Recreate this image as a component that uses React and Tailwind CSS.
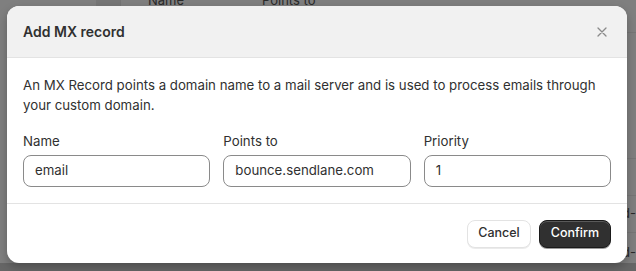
import React from "react";

export default function App() {
  return (
    <div
      className="relative w-[636px] h-[271px] overflow-hidden bg-[#7f7f7f]"
      style={{ fontFamily: "Inter, 'Noto Sans', sans-serif" }}
    >
      {/* underlying page seen through the overlay */}
      <div className="absolute inset-0 pointer-events-none">
        <div className="absolute left-[96px] top-0 h-full w-[24px] bg-[#767676]" />
        <div className="absolute left-[120px] top-0 h-full w-px bg-[#747474]" />
        <div className="absolute left-[148px] top-[-9px] text-[13px] text-[#2a2a2a]">Name</div>
        <div className="absolute left-[262px] top-[-9px] text-[13px] text-[#2a2a2a]">Points to</div>
        <div className="absolute right-0 top-[32px] h-px w-[16px] bg-[#767676]" />
        <div className="absolute right-0 top-[158px] h-px w-[16px] bg-[#767676]" />
        <div className="absolute right-0 top-[195px] h-px w-[16px] bg-[#767676]" />
        <div className="absolute right-0 top-[232px] h-px w-[16px] bg-[#767676]" />
        <div className="absolute left-[622px] top-[204px] text-[13px] text-[#2a2a2a]">d-</div>
        <div className="absolute left-[622px] top-[243px] text-[13px] text-[#2a2a2a]">d-</div>
        <div className="absolute left-0 bottom-0 h-[8px] w-full bg-[#666666]" />
      </div>

      <div className="relative pl-[7px] pt-[6px]">
        <div className="w-[620px] h-[257px] rounded-[12px] bg-white overflow-hidden shadow-[0_4px_10px_rgba(0,0,0,0.25)] flex flex-col">
          <div className="h-[52px] shrink-0 bg-[#f1f1f1] border-b border-[#e3e3e3] flex items-center justify-between pl-4 pr-[20px]">
            <span className="text-[14px] font-semibold text-[#303030]">Add MX record</span>
            <svg width="10" height="10" viewBox="0 0 10 10" className="text-[#8a8a8a]">
              <path d="M1 1L9 9M9 1L1 9" stroke="currentColor" strokeWidth="1.3" strokeLinecap="round" />
            </svg>
          </div>
          <div className="px-4 pt-4 pb-4 border-b border-[#e3e3e3]">
            <p className="pt-px text-[13.25px] leading-[20px] text-[#303030]">
              An MX Record points a domain name to a mail server and is used to process emails through your custom domain.
            </p>
            <div className="mt-[16px] grid grid-cols-3 gap-[13px]">
              {[
                ["Name", "email"],
                ["Points to", "bounce.sendlane.com"],
                ["Priority", "1"],
              ].map(([label, value]) => (
                <div key={label} className="flex flex-col gap-[4px]">
                  <span className="text-[13.25px] leading-[20px] text-[#303030]">{label}</span>
                  <div className="h-[32px] rounded-[8px] border border-[#8a8a8a] flex items-center px-[11px] text-[13.25px] text-[#303030]">
                    {value}
                  </div>
                </div>
              ))}
            </div>
          </div>
          <div className="flex-1 flex items-center justify-end gap-[8px] px-4">
            <button className="h-[28px] px-[10px] rounded-[8px] bg-white border border-[#e3e3e3] shadow-[0_1px_0_rgba(0,0,0,0.08)] text-[12.5px] font-medium text-[#303030]">
              Cancel
            </button>
            <button className="h-[28px] px-[11px] rounded-[8px] bg-[#303030] border border-[#1a1a1a] shadow-[inset_0_1px_0_rgba(255,255,255,0.2),0_1px_0_rgba(0,0,0,0.4)] text-[12.5px] font-medium text-white">
              Confirm
            </button>
          </div>
        </div>
      </div>
    </div>
  );
}
